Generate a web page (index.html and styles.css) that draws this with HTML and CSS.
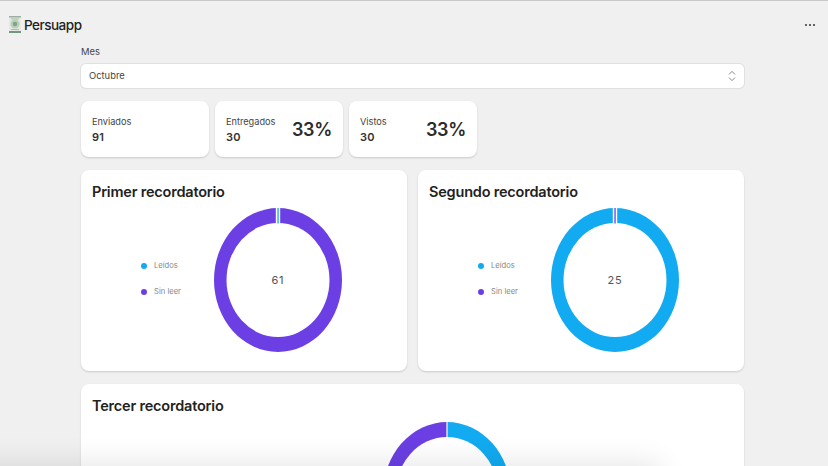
FILE: index.html
```html
<!DOCTYPE html>
<html lang="es">
  <head>
    <meta charset="UTF-8" />
    <title>Persuapp</title>
    <link rel="stylesheet" href="styles.css">
  </head>
  <body>
    <header class="topbar">
      <div class="brand">
        <svg class="brand-logo" viewBox="0 0 12 17" aria-hidden="true">
          <rect width="12" height="17" fill="#e4e9e2" />
          <rect x="0" y="0" width="12" height="1.5" fill="#9db0a0" />
          <rect x="0" y="15" width="12" height="2" fill="#6f9a78" />
          <circle cx="6" cy="8" r="4.6" fill="#b9cfbb" />
          <circle cx="6" cy="8" r="2.2" fill="#7ba585" />
          <rect x="2" y="2.6" width="8" height="0.7" fill="#9aa89c" />
          <rect x="2" y="13.2" width="8" height="0.7" fill="#9aa89c" />
        </svg>
        <span class="brand-name">Persuapp</span>
      </div>
      <svg class="menu-dots" viewBox="0 0 12 4" aria-hidden="true">
        <circle cx="2" cy="2" r="1.1" />
        <circle cx="6" cy="2" r="1.1" />
        <circle cx="10" cy="2" r="1.1" />
      </svg>
    </header>

    <main class="content">
      <label class="field-label">Mes</label>
      <div class="select">
        <span class="select-text">Octubre</span>
        <svg class="select-icon" viewBox="0 0 8 12" aria-hidden="true">
          <path d="M1 4.4 4 1.4 7 4.4M1 7.6 4 10.6 7 7.6" />
        </svg>
      </div>

      <section class="stats">
        <div class="stat-card">
          <div>
            <div class="stat-label">Enviados</div>
            <div class="stat-value">91</div>
          </div>
        </div>
        <div class="stat-card">
          <div>
            <div class="stat-label">Entregados</div>
            <div class="stat-value">30</div>
          </div>
          <div class="stat-percent">33%</div>
        </div>
        <div class="stat-card">
          <div>
            <div class="stat-label">Vistos</div>
            <div class="stat-value">30</div>
          </div>
          <div class="stat-percent">33%</div>
        </div>
      </section>

      <section class="charts">
        <article class="chart-card">
          <h2>Primer recordatorio</h2>
          <div class="chart-body">
            <ul class="legend">
              <li><span class="dot dot-read"></span>Leídos</li>
              <li><span class="dot dot-unread"></span>Sin leer</li>
            </ul>
            <div class="donut">
              <svg viewBox="0 0 128 144" preserveAspectRatio="none" aria-hidden="true">
                <ellipse class="fill-unread" cx="64" cy="72" rx="64" ry="72" />
                <ellipse class="hole" cx="64" cy="72" rx="51.5" ry="57" />
                <rect x="61.8" y="0" width="4.4" height="15.5" fill="#fff" />
                <rect x="63.4" y="0" width="1.3" height="15.5" fill="#12aaf0" />
              </svg>
              <span class="donut-value">61</span>
            </div>
          </div>
        </article>

        <article class="chart-card">
          <h2>Segundo recordatorio</h2>
          <div class="chart-body">
            <ul class="legend">
              <li><span class="dot dot-read"></span>Leídos</li>
              <li><span class="dot dot-unread"></span>Sin leer</li>
            </ul>
            <div class="donut">
              <svg viewBox="0 0 128 144" preserveAspectRatio="none" aria-hidden="true">
                <ellipse class="fill-read" cx="64" cy="72" rx="64" ry="72" />
                <ellipse class="hole" cx="64" cy="72" rx="51.5" ry="57" />
                <rect x="61.8" y="0" width="4.4" height="15.5" fill="#fff" />
                <rect x="63.4" y="0" width="1.3" height="15.5" fill="#6b3fe4" />
              </svg>
              <span class="donut-value">25</span>
            </div>
          </div>
        </article>

        <article class="chart-card chart-card-wide">
          <h2>Tercer recordatorio</h2>
          <div class="chart-body">
            <div class="legend-spacer"></div>
            <div class="donut">
              <svg viewBox="0 0 128 144" preserveAspectRatio="none" aria-hidden="true">
                <path class="fill-read" d="M64 0A64 72 0 0 1 64 144Z" />
                <path class="fill-unread" d="M64 144A64 72 0 0 1 64 0Z" />
                <ellipse class="hole" cx="64" cy="72" rx="51.5" ry="57" />
                <rect x="63.4" y="0" width="1.2" height="15.5" fill="#fff" />
              </svg>
            </div>
          </div>
        </article>
      </section>
    </main>

    <div class="bottom-shadow"></div>
  </body>
</html>
```

FILE: styles.css
```css
html,
body {
  height: 100%;
}
body {
  margin: 0;
  overflow: hidden;
  position: relative;
  background-color: #f0f0f0;
  border-top: 1px solid #c9c9c9;
  box-sizing: border-box;
  font-family: Inter, "Liberation Sans", sans-serif;
  color: #2b2b2b;
}
.topbar {
  display: flex;
  justify-content: space-between;
  align-items: center;
  height: 49px;
  padding: 0 12px 0 9px;
}
.brand {
  display: flex;
  align-items: center;
  gap: 3px;
  margin-top: -2px;
}
.brand-logo {
  width: 12px;
  height: 17px;
}
.brand-name {
  font-size: 13.5px;
  font-weight: 500;
  letter-spacing: -0.5px;
  color: #222;
}
.menu-dots {
  width: 12px;
  height: 4px;
  margin-top: -2px;
  fill: #444;
}
.content {
  width: 663px;
  margin-left: 81px;
}
.field-label {
  display: block;
  font-size: 9.4px;
  line-height: 12px;
  margin-top: -4px;
  margin-bottom: 6px;
  color: #444;
}
.select {
  display: flex;
  justify-content: space-between;
  align-items: center;
  height: 24px;
  padding: 0 8px;
  box-sizing: border-box;
  background-color: #fff;
  border-radius: 5px;
  box-shadow: 0 0 0 1px #e0e0e0, 0 1px 1px rgba(0, 0, 0, 0.08);
  font-size: 9.4px;
  color: #444;
}
.select-text {
  padding-bottom: 2px;
}
.select-icon {
  width: 8px;
  height: 12px;
  fill: none;
  stroke: #888;
  stroke-width: 1;
}
.stats {
  display: flex;
  gap: 6px;
  margin-top: 13px;
}
.stat-card {
  display: flex;
  justify-content: space-between;
  align-items: center;
  width: 128px;
  height: 56px;
  padding: 2px 11px 0;
  box-sizing: border-box;
  background-color: #fff;
  border-radius: 8px;
  box-shadow: 0 1px 2px rgba(0, 0, 0, 0.16);
}
.stat-label {
  font-size: 9.2px;
  line-height: 14px;
  color: #444;
}
.stat-value {
  font-size: 11px;
  line-height: 17px;
  font-weight: 600;
  letter-spacing: 0.3px;
  color: #333;
}
.stat-percent {
  font-size: 18px;
  font-weight: 600;
  letter-spacing: -0.3px;
  color: #2b2b2b;
  margin-top: -2px;
}
.charts {
  display: grid;
  grid-template-columns: 326px 326px;
  column-gap: 11px;
  row-gap: 13px;
  margin-top: 13px;
}
.chart-card {
  height: 201px;
  padding: 13px 11px 0;
  box-sizing: border-box;
  background-color: #fff;
  border-radius: 8px;
  box-shadow: 0 1px 2px rgba(0, 0, 0, 0.16);
}
.chart-card-wide {
  grid-column: 1 / 3;
}
.chart-card h2 {
  margin: 0;
  font-size: 14.5px;
  line-height: 17px;
  font-weight: 600;
  letter-spacing: -0.2px;
  color: #222;
}
.chart-body {
  display: flex;
  justify-content: center;
  align-items: center;
  gap: 33px;
  margin-top: 8px;
  margin-left: -5px;
}
.legend {
  list-style: none;
  margin: -2px 0 0;
  padding: 0;
  display: flex;
  flex-direction: column;
  gap: 14px;
  font-size: 7.6px;
  line-height: 12px;
  color: #888;
}
.legend li {
  display: flex;
  align-items: center;
  gap: 7px;
}
.legend-spacer {
  width: 40px;
}
.dot {
  width: 6px;
  height: 6px;
  border-radius: 50%;
}
.dot-read {
  background-color: #12aaf0;
}
.dot-unread {
  background-color: #6b3fe4;
}
.donut {
  position: relative;
  width: 128px;
  height: 144px;
}
.donut svg {
  display: block;
  width: 128px;
  height: 144px;
}
.fill-read {
  fill: #12aaf0;
}
.fill-unread {
  fill: #6b3fe4;
}
.hole {
  fill: #fff;
}
.donut-value {
  position: absolute;
  top: 50%;
  left: 0;
  right: 0;
  transform: translateY(-50%);
  text-align: center;
  font-size: 11px;
  letter-spacing: 0.7px;
  color: #555;
}
.bottom-shadow {
  position: absolute;
  left: -40px;
  right: 170px;
  bottom: -30px;
  height: 30px;
  box-shadow: 0 0 30px 2px rgba(0, 0, 0, 0.11);
}
```
